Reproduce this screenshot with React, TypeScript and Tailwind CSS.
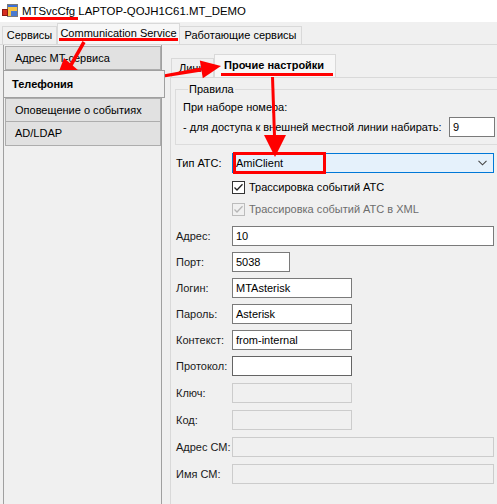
import React from "react";

const font = { fontFamily: '"Liberation Sans", Arial, sans-serif' };

function AppIcon() {
  return (
    <svg width="16" height="16" viewBox="0 0 16 16">
      <rect x="5.5" y="1.5" width="10" height="12" fill="#f6c343" stroke="#7a7a7a" />
      <rect x="6" y="2" width="9" height="2" fill="#3a6fd8" />
      <rect x="9" y="8" width="6" height="5" fill="#4a7bd0" />
      <rect x="0.5" y="6.5" width="5" height="6" fill="#d62d20" stroke="#8a1a10" />
    </svg>
  );
}

function Field({ label, value, w, disabled, dark }: { label: string; value?: string; w: string; disabled?: boolean; dark?: boolean }) {
  return (
    <div className="flex items-center h-[20px]">
      <div className="w-[56px] shrink-0 whitespace-nowrap text-[11px] text-[#1a1a1a] leading-[14px]">{label}</div>
      <div
        className={
          "h-[20px] shrink-0 flex items-center pl-[3px] text-[11px] text-black whitespace-nowrap " +
          w +
          (disabled
            ? " bg-[#f0f0f0] border border-[#cccccc]"
            : dark
            ? " bg-white border border-[#646464]"
            : " bg-white border border-[#7a7a7a]")
        }
      >
        {value}
      </div>
    </div>
  );
}

function Check({ disabled }: { disabled?: boolean }) {
  return (
    <svg width="13" height="13" viewBox="0 0 13 13">
      <rect x="0.5" y="0.5" width="12" height="12" fill={disabled ? "#f0f0f0" : "#ffffff"} stroke={disabled ? "#bcbcbc" : "#333333"} />
      <path d="M2.5 6.5 L5 9 L10.5 3.2" fill="none" stroke={disabled ? "#b5b5b5" : "#222222"} strokeWidth="1.3" />
    </svg>
  );
}

export default function App() {
  return (
    <div className="relative w-[497px] h-[504px] overflow-hidden bg-[#f0f0f0] text-black" style={font}>
      {/* Title bar */}
      <div className="h-[22px] bg-white flex items-center pl-[2px] gap-[4px]">
        <AppIcon />
        <span className="text-[11.4px] leading-[16px] text-black whitespace-nowrap">MTSvcCfg LAPTOP-QOJH1C61.MT_DEMO</span>
      </div>

      {/* Main tab strip */}
      <div className="h-[22px] flex items-end pl-[2px]">
        <div className="w-[55px] shrink-0 h-[18px] border border-b-0 border-[#d9d9d9] bg-[#f0f0f0] text-[11px] whitespace-nowrap flex items-center justify-center">Сервисы</div>
        <div className="w-[123px] shrink-0 h-[21px] border border-b-0 border-[#d9d9d9] bg-[#f7f7f7] text-[11px] whitespace-nowrap flex items-center justify-center pb-[2px]">Communication Service</div>
        <div className="w-[122px] shrink-0 h-[18px] border border-b-0 border-l-0 border-[#d9d9d9] bg-[#f0f0f0] text-[11px] whitespace-nowrap flex items-center justify-center">Работающие сервисы</div>
      </div>

      {/* Main tab page */}
      <div className="border-t border-[#d9d9d9] flex h-[460px]">
        {/* Left panel */}
        <div className="ml-[3px] w-[159px] shrink-0 h-full border-x border-[#a0a0a0] flex flex-col pt-[1px]">
          <div className="ml-[1px] h-[24px] bg-[#e1e1e1] border border-[#adadad] text-[11px] whitespace-nowrap flex items-center pl-[9px]">Адрес MT-сервиса</div>
          <div className="-ml-[1px] -mr-[4px] h-[28px] bg-[#f0f0f0] border border-[#a0a0a0] text-[11px] font-bold whitespace-nowrap flex items-center pl-[8px] relative z-10">Телефония</div>
          <div className="ml-[1px] h-[24px] bg-[#e1e1e1] border border-[#adadad] text-[11px] whitespace-nowrap flex items-center pl-[9px]">Оповещение о событиях</div>
          <div className="ml-[1px] h-[24px] bg-[#e1e1e1] border border-t-0 border-[#adadad] text-[11px] whitespace-nowrap flex items-center pl-[9px]">AD/LDAP</div>
        </div>

        {/* Inner tab control */}
        <div className="ml-[8px] flex flex-col w-[340px] shrink-0">
          <div className="mt-[9px] h-[23px] flex items-end">
            <div className="ml-[1px] w-[43px] shrink-0 h-[19px] border border-b-0 border-[#d9d9d9] bg-[#f0f0f0] text-[11px] whitespace-nowrap flex items-center pl-[7px]">Линии</div>
            <div className="w-[122px] shrink-0 h-[23px] border border-b-0 border-[#d9d9d9] bg-[#f7f7f7] text-[11px] font-bold whitespace-nowrap flex items-center pl-[9px] pb-[2px]">Прочие настройки</div>
          </div>
          <div className="flex-1 border-t border-l border-[#d9d9d9] pl-[4px] pt-[4px]">
            <fieldset className="border border-[#dcdcdc] w-[330px] pl-[7px] pb-[7px]">
              <legend className="ml-[5px] px-[1px] text-[11px] leading-[14px]">Правила</legend>
              <div className="pt-[4px] text-[11px] leading-[14px] whitespace-nowrap">При наборе номера:</div>
              <div className="mt-[3px] flex items-center h-[20px]">
                <div className="w-[266px] shrink-0 whitespace-nowrap text-[11px] leading-[14px]">- для доступа к внешней местной линии набирать:</div>
                <div className="w-[46px] shrink-0 h-[20px] bg-white border border-[#7a7a7a] text-[11px] flex items-center pl-[3px]">9</div>
              </div>
            </fieldset>

            <div className="pl-[1px] mt-[8px] flex flex-col">
              <div className="flex items-center h-[20px]">
                <div className="w-[56px] shrink-0 text-[11px] leading-[14px] whitespace-nowrap">Тип АТС:</div>
                <div className="w-[262px] shrink-0 h-[20px] bg-[#e5f1fb] border border-[#0078d7] flex items-center justify-between pl-[3px] pr-[6px] text-[11px]">
                  <span>AmiClient</span>
                  <svg width="9" height="6" viewBox="0 0 9 6">
                    <path d="M0.5 0.8 L4.5 4.8 L8.5 0.8" fill="none" stroke="#444" strokeWidth="1.1" />
                  </svg>
                </div>
              </div>
              <div className="mt-[7px] ml-[56px] h-[14px] flex items-center gap-[4px]">
                <Check />
                <span className="text-[11px] leading-[14px] whitespace-nowrap">Трассировка событий АТС</span>
              </div>
              <div className="mt-[8px] ml-[56px] h-[14px] flex items-center gap-[4px]">
                <Check disabled />
                <span className="text-[11px] leading-[14px] text-[#6d6d6d] whitespace-nowrap">Трассировка событий АТС в XML</span>
              </div>
              <div className="mt-[10px] flex flex-col gap-[6px]">
                <Field label="Адрес:" value="10" w="w-[262px]" />
                <Field label="Порт:" value="5038" w="w-[58px]" />
                <Field label="Логин:" value="MTAsterisk" w="w-[120px]" />
                <Field label="Пароль:" value="Asterisk" w="w-[120px]" />
                <Field label="Контекст:" value="from-internal" w="w-[120px]" />
                <Field label="Протокол:" value="" w="w-[120px]" dark />
              </div>
              <div className="mt-[7px] flex flex-col gap-[7px]">
                <Field label="Ключ:" w="w-[120px]" disabled />
                <Field label="Код:" w="w-[120px]" disabled />
                <Field label="Адрес СМ:" w="w-[262px]" disabled />
                <Field label="Имя СМ:" w="w-[262px]" disabled />
              </div>
            </div>
          </div>
        </div>
      </div>

      {/* Red annotations overlay */}
      <svg className="absolute inset-0 pointer-events-none" width="497" height="504" viewBox="0 0 497 504">
        <g fill="#ff0000" stroke="none">
          <rect x="20" y="17" width="58" height="3" />
          <rect x="59" y="38" width="119" height="3" />
          <rect x="7" y="94" width="73" height="3" />
          <rect x="221" y="73" width="112" height="3" />
          {/* arrow 1 */}
          <polygon points="82.5,41 85.5,43 72.5,66 69.5,64" />
          <polygon points="55,82 64,58 79,71" />
          {/* arrow 2 */}
          <polygon points="88,88.5 88,89.5 201.6,71.4 201,67.4" />
          <polygon points="221,66 199.8,60.5 202.8,78.3" />
          {/* arrow 3 */}
          <polygon points="271,77 274,77 276,136 273,136" />
          <polygon points="264,135 286,135 275,157" />
        </g>
        <rect x="234.5" y="153.5" width="90" height="19" fill="none" stroke="#ff0000" strokeWidth="3" />
      </svg>
    </div>
  );
}
